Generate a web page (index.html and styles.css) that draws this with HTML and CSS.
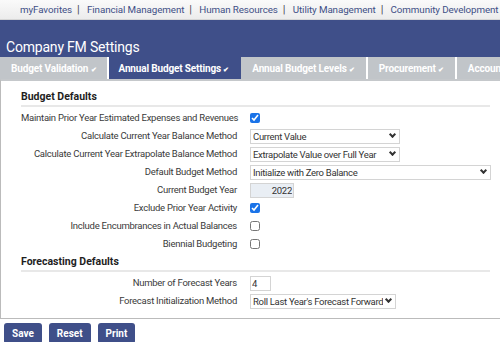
FILE: index.html
```html
<!DOCTYPE html>
<html lang="en">
<head>
    <meta charset="UTF-8">
    <title>Company FM Settings</title>
    <link rel="stylesheet" href="styles.css">
</head>
<body>
    <div class="topnav">
        <a href="#">myFavorites</a><span class="sep">|</span>
        <a href="#">Financial Management</a><span class="sep">|</span>
        <a href="#">Human Resources</a><span class="sep">|</span>
        <a href="#">Utility Management</a><span class="sep">|</span>
        <a href="#">Community Development</a>
    </div>

    <div class="header">
        <h1>Company FM Settings</h1>
        <div class="tabs">
            <div class="tab">Budget Validation <span class="chk">&#10004;</span></div>
            <div class="tab active">Annual Budget Settings <span class="chk">&#10004;</span></div>
            <div class="tab">Annual Budget Levels <span class="chk">&#10004;</span></div>
            <div class="tab">Procurement <span class="chk">&#10004;</span></div>
            <div class="tab">Accounts</div>
        </div>
    </div>

    <div class="panel">
        <h2>Budget Defaults</h2>
        <div class="rows">
            <label>Maintain Prior Year Estimated Expenses and Revenues</label>
            <div><input type="checkbox" checked></div>

            <label>Calculate Current Year Balance Method</label>
            <div><span class="sel"><select class="w150"><option>Current Value</option></select></span></div>

            <label>Calculate Current Year Extrapolate Balance Method</label>
            <div><span class="sel"><select class="w150"><option>Extrapolate Value over Full Year</option></select></span></div>

            <label>Default Budget Method</label>
            <div><span class="sel"><select class="w241"><option>Initialize with Zero Balance</option></select></span></div>

            <label>Current Budget Year</label>
            <div><input type="text" class="year" value="2022" readonly></div>

            <label>Exclude Prior Year Activity</label>
            <div><input type="checkbox" checked></div>

            <label>Include Encumbrances in Actual Balances</label>
            <div><input type="checkbox"></div>

            <label>Biennial Budgeting</label>
            <div><input type="checkbox"></div>
        </div>

        <h2 class="second">Forecasting Defaults</h2>
        <div class="rows">
            <label>Number of Forecast Years</label>
            <div><input type="text" class="num" value="4"></div>

            <label>Forecast Initialization Method</label>
            <div><span class="sel"><select class="w146"><option>Roll Last Year's Forecast Forward</option></select></span></div>
        </div>
    </div>

    <div class="actions">
        <button>Save</button>
        <button>Reset</button>
        <button>Print</button>
    </div>
</body>
</html>
```

FILE: styles.css
```css
body {
    margin: 0;
    font-family: Roboto, "Open Sans", sans-serif;
    font-size: 9.5px;
    letter-spacing: -0.25px;
    color: #3a3a3a;
    background: #fff;
    overflow: hidden;
}
.topnav {
    height: 19px;
    line-height: 19px;
    padding-left: 20px;
    background: linear-gradient(#fafafa, #ececec);
    border-bottom: 1px solid #d6d6d6;
    font-size: 9.8px;
    letter-spacing: -0.1px;
    white-space: nowrap;
}
.topnav a {
    color: #3e4f86;
    text-decoration: none;
}
.topnav .sep {
    color: #4a4a55;
    font-size: 11px;
    margin: 0 5px;
}
.header {
    background: #3f4f89;
}
h1 {
    margin: 0;
    padding: 17px 0 0 6px;
    height: 20px;
    font-size: 14px;
    letter-spacing: -0.2px;
    font-weight: normal;
    color: #fff;
    line-height: 20px;
}
.tabs {
    display: flex;
    height: 22px;
    white-space: nowrap;
}
.tab {
    flex: none;
    height: 22px;
    line-height: 23px;
    padding: 0 11px;
    background: #c1c5c9;
    color: #fff;
    font-weight: bold;
    font-size: 10px;
    letter-spacing: -0.15px;
    border-right: 2px solid #fff;
}
.tab.active {
    background: #3f4f89;
    border-right-color: #3f4f89;
    padding: 0 10px 0 9px;
}
.tab .chk {
    font-size: 7px;
}
.panel {
    border-left: 1px solid #bbb;
    border-bottom: 1px solid #bbb;
    border-top: 2px solid #c5c8cb;
    padding: 8px 10px 8px 20px;
}
h2 {
    margin: 0;
    font-size: 10.5px;
    letter-spacing: 0;
    font-weight: bold;
    color: #1e1e1e;
    line-height: 16px;
    border-bottom: 2px solid #e8e8e8;
}
h2.second {
    margin-top: 1px;
}
.rows {
    display: grid;
    grid-template-columns: 216px 1fr;
    column-gap: 13px;
    padding-top: 2px;
}
.rows label {
    text-align: right;
    height: 18px;
    line-height: 18px;
    white-space: nowrap;
}
.rows div {
    height: 18px;
    display: flex;
    align-items: center;
}
input[type=checkbox] {
    margin: 0;
    width: 10px;
    height: 10px;
    accent-color: #1a73e8;
}
select, input[type=text] {
    font-family: inherit;
    font-size: 9.5px;
    letter-spacing: -0.25px;
    color: #333;
    height: 15px;
    border: 1px solid #d4d4d4;
    border-radius: 0;
    padding: 0 1px;
    background: #fff;
    box-sizing: border-box;
}
.sel {
    position: relative;
    display: inline-block;
    height: 15px;
}
.sel select {
    appearance: none;
    -webkit-appearance: none;
    padding: 0 12px 0 2px;
    letter-spacing: -0.3px;
    display: block;
}
.sel::after {
    content: '';
    position: absolute;
    right: 5px;
    top: 3px;
    width: 3px;
    height: 3px;
    border-right: 2px solid #333;
    border-bottom: 2px solid #333;
    transform: rotate(45deg);
    pointer-events: none;
}
.w150 { width: 150px; }
.w241 { width: 241px; }
.w146 { width: 146px; }
.year {
    width: 44px;
    height: 14px;
    text-align: right;
    background: #e9eef4 !important;
}
.num {
    width: 21px;
}
.actions {
    display: flex;
    gap: 7px;
    padding: 4px 0 0 4px;
}
button {
    font-family: inherit;
    font-weight: bold;
    font-size: 10px;
    letter-spacing: 0;
    color: #fff;
    background: #3f4f89;
    border: none;
    border-radius: 3px;
    height: 21px;
    padding: 0 8px;
}
```
